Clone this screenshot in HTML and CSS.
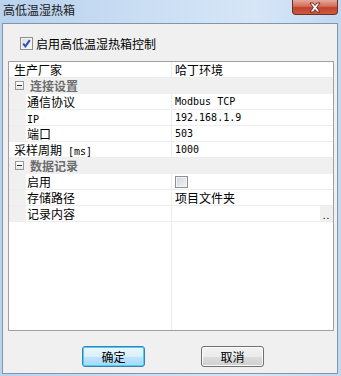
FILE: index.html
```html
<!DOCTYPE html>
<html lang="zh-CN">

<head>
    <meta charset="UTF-8">
    <title>高低温湿热箱</title>
    <link rel="stylesheet" href="styles.css">
</head>

<body>
    <div class="window">
        <div class="titlebar">
            <span class="title">高低温湿热箱</span>
            <div class="close-btn">
                <svg width="14" height="11" viewBox="0 0 14 11">
                    <path d="M2 1 L5 1 L7 3.5 L9 1 L12 1 L8.6 5.5 L12 10 L9 10 L7 7.5 L5 10 L2 10 L5.4 5.5 Z" fill="#fff" stroke="#5a2a22" stroke-width="0.9" stroke-linejoin="round"/>
                </svg>
            </div>
        </div>

        <div class="client">
            <label class="enable-row">
                <span class="check checked">
                    <svg width="11" height="11" viewBox="0 0 11 11">
                        <path d="M2.2 5.6 L4.4 8.3 L8.8 2.2" fill="none" stroke="#2a4fae" stroke-width="2"/>
                    </svg>
                </span>
                <span>启用高低温湿热箱控制</span>
            </label>

            <div class="grid">
                <div class="row">
                    <div class="name top">生产厂家</div>
                    <div class="value">哈丁环境</div>
                </div>
                <div class="row category">
                    <span class="toggle"></span>
                    <span class="cat-name">连接设置</span>
                </div>
                <div class="row">
                    <div class="gutter"></div>
                    <div class="name sub">通信协议</div>
                    <div class="value"><span class="mono">Modbus TCP</span></div>
                </div>
                <div class="row">
                    <div class="gutter"></div>
                    <div class="name sub"><span class="mono">IP</span></div>
                    <div class="value"><span class="mono">192.168.1.9</span></div>
                </div>
                <div class="row">
                    <div class="gutter"></div>
                    <div class="name sub">端口</div>
                    <div class="value"><span class="mono">503</span></div>
                </div>
                <div class="row">
                    <div class="name top">采样周期<span class="mono"> [ms]</span></div>
                    <div class="value"><span class="mono">1000</span></div>
                </div>
                <div class="row category">
                    <span class="toggle"></span>
                    <span class="cat-name">数据记录</span>
                </div>
                <div class="row">
                    <div class="gutter"></div>
                    <div class="name sub">启用</div>
                    <div class="value"><span class="check small"></span></div>
                </div>
                <div class="row">
                    <div class="gutter"></div>
                    <div class="name sub">存储路径</div>
                    <div class="value">项目文件夹</div>
                </div>
                <div class="row">
                    <div class="gutter"></div>
                    <div class="name sub">记录内容</div>
                    <div class="value"><span class="dots">..</span></div>
                </div>
            </div>

            <div class="buttons">
                <button class="btn default">确定</button>
                <button class="btn">取消</button>
            </div>
        </div>
    </div>
</body>

</html>
```

FILE: styles.css
```css
* {
    margin: 0;
    padding: 0;
    box-sizing: border-box;
    font-family: "Noto Sans CJK SC", "Liberation Sans", sans-serif;
}

body {
    width: 341px;
    height: 376px;
    overflow: hidden;
    background: #c3d9f1;
}

.window {
    display: flex;
    flex-direction: column;
    height: 376px;
    background: linear-gradient(to right, #b9d2ee, #cfe1f5 55%, #d6e6f7 75%, #c2d8f1);
}

.titlebar {
    height: 23px;
    display: flex;
    justify-content: space-between;
    align-items: flex-start;
    padding-left: 3px;
}

.title {
    font-size: 12px;
    line-height: 20px;
    color: #1a1a1a;
}

.close-btn {
    width: 46px;
    height: 15px;
    margin-right: 3px;
    border: 1px solid #6e2f25;
    border-top: none;
    border-radius: 0 0 4px 4px;
    background: linear-gradient(#e6a89c, #d26e5a 45%, #c2412a 55%, #cf5a40);
    display: flex;
    align-items: center;
    justify-content: center;
}

.client {
    flex: 1;
    margin: 0 3px 2px 2px;
    border: 1px solid #8196ad;
    background: #f0f0f0;
    display: flex;
    flex-direction: column;
}

.enable-row {
    display: flex;
    align-items: center;
    gap: 3px;
    height: 37px;
    padding: 13px 0 11px 17px;
    font-size: 12px;
    color: #000;
}

.check {
    width: 13px;
    height: 13px;
    border: 1px solid #8f8f8f;
    background: linear-gradient(135deg, #dcdcdc, #f8f8f8);
    display: flex;
    align-items: center;
    justify-content: center;
    box-shadow: inset 0 0 0 1px #f4f4f4;
}

.check.small {
    display: block;
    width: 13px;
    height: 12px;
    margin-top: 1px;
    background: linear-gradient(135deg, #cfd6e0, #f2f5f9);
}

.grid {
    width: 326px;
    height: 270px;
    margin-left: 5px;
    border: 1px solid #a0a0a0;
    background: linear-gradient(to right, transparent 162px, #ededed 162px, #ededed 163px, transparent 163px), #fff;
    font-size: 12px;
    color: #000;
}

.row {
    display: flex;
    height: 16px;
    border-bottom: 1px solid #ededed;
    line-height: 15px;
}

.gutter {
    width: 17px;
    background: #f0f0f0;
}

.name {
    width: 163px;
    border-right: 1px solid #ededed;
    white-space: nowrap;
    overflow: hidden;
}

.name.top {
    padding-left: 5px;
}

.name.sub {
    width: 146px;
    padding-left: 1px;
}

.value {
    flex: 1;
    padding-left: 3px;
    display: flex;
    align-items: center;
    white-space: nowrap;
}

.mono {
    font-family: "DejaVu Sans Mono", monospace;
    font-size: 10px;
}

.category {
    background: #f0f0f0;
    border-bottom-color: #f0f0f0;
    align-items: center;
    padding-left: 6px;
}

.toggle {
    width: 9px;
    height: 9px;
    border: 1px solid #9a9a9a;
    background: linear-gradient(#fff, #e6e6e6);
    position: relative;
}

.toggle::after {
    content: "";
    position: absolute;
    left: 1px;
    top: 3px;
    width: 5px;
    height: 1px;
    background: #333;
}

.cat-name {
    margin-left: 6px;
    font-weight: bold;
    color: #6d6d6d;
}

.dots {
    margin-left: auto;
    width: 13px;
    height: 15px;
    background: #f0f0f0;
    font-size: 10px;
    line-height: 18px;
    text-align: center;
    letter-spacing: 1px;
}

.buttons {
    display: flex;
    gap: 56px;
    padding: 15px 0 0 79px;
}

.btn {
    width: 63px;
    height: 21px;
    border: 1px solid #707070;
    border-radius: 3px;
    background: linear-gradient(#f2f2f2, #ebebeb 50%, #dddddd 50%, #cfcfcf);
    box-shadow: inset 0 0 0 1px #fcfcfc;
    font-size: 12px;
    color: #000;
}

.btn.default {
    border-color: #3c7fb1;
    background: linear-gradient(#eaf6fd, #d9f0fc 50%, #bee6fd 50%, #a7d9f5);
    box-shadow: inset 0 0 0 1px #48d0f8;
}
```
